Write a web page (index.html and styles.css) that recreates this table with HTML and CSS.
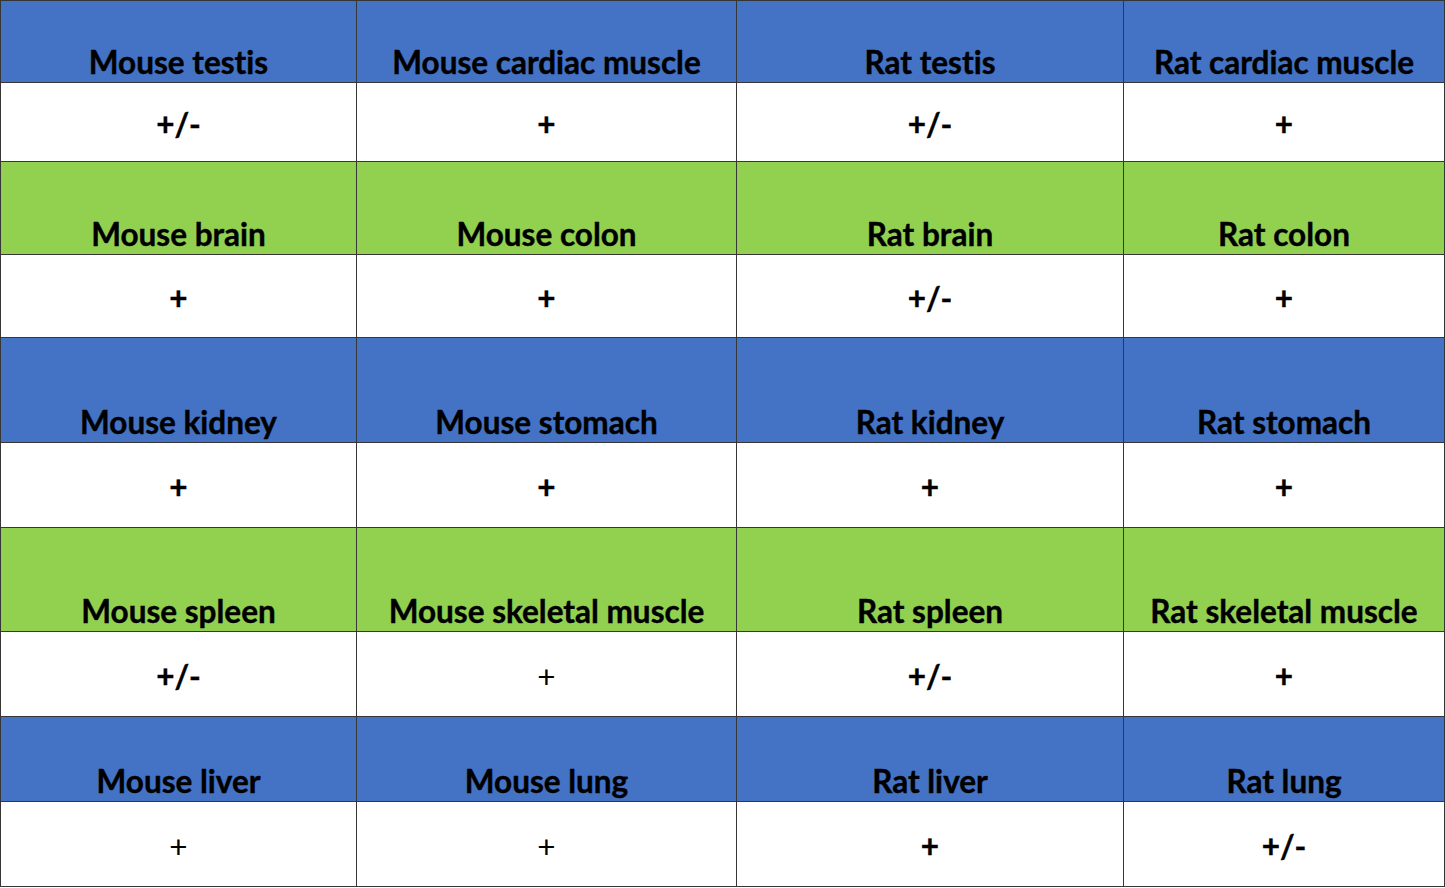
FILE: index.html
```html
<!DOCTYPE html>
<html>
<head>
<meta charset="utf-8">
<link rel="stylesheet" href="styles.css">
</head>
<body>
<table class="grid">
  <colgroup>
    <col class="c1"><col class="c2"><col class="c3"><col class="c4">
  </colgroup>
  <tr class="head blue r1">
    <th>Mouse testis</th><th>Mouse cardiac muscle</th><th>Rat testis</th><th>Rat cardiac muscle</th>
  </tr>
  <tr class="val v1">
    <td>+/-</td><td>+</td><td>+/-</td><td>+</td>
  </tr>
  <tr class="head green r2">
    <th>Mouse brain</th><th>Mouse colon</th><th>Rat brain</th><th>Rat colon</th>
  </tr>
  <tr class="val v2">
    <td>+</td><td>+</td><td>+/-</td><td>+</td>
  </tr>
  <tr class="head blue r3">
    <th>Mouse kidney</th><th>Mouse stomach</th><th>Rat kidney</th><th>Rat stomach</th>
  </tr>
  <tr class="val v3">
    <td>+</td><td>+</td><td>+</td><td>+</td>
  </tr>
  <tr class="head green r4">
    <th>Mouse spleen</th><th>Mouse skeletal muscle</th><th>Rat spleen</th><th>Rat skeletal muscle</th>
  </tr>
  <tr class="val v4">
    <td>+/-</td><td class="thin">+</td><td>+/-</td><td>+</td>
  </tr>
  <tr class="head blue r5">
    <th>Mouse liver</th><th>Mouse lung</th><th>Rat liver</th><th>Rat lung</th>
  </tr>
  <tr class="val v5">
    <td class="thin">+</td><td class="thin">+</td><td>+</td><td>+/-</td>
  </tr>
</table>
</body>
</html>
```

FILE: styles.css
```css
html, body {
  margin: 0;
  padding: 0;
  background: #ffffff;
}

.grid {
  border-collapse: collapse;
  table-layout: fixed;
  width: 1444px;
  font-family: Lato, "Open Sans", "Liberation Sans", sans-serif;
  font-variant-ligatures: none;
  font-feature-settings: "liga" 0, "clig" 0;
  color: #000;
}

.c1 { width: 356px; }
.c2 { width: 380px; }
.c3 { width: 387px; }
.c4 { width: 321px; }

.grid th,
.grid td {
  border: 1.5px solid #363636;
  text-align: center;
  padding: 0;
  box-sizing: border-box;
}

.head th {
  font-size: 31.5px;
  font-weight: 700;
  vertical-align: bottom;
  line-height: 34px;
  padding-bottom: 3px;
  white-space: nowrap;
  -webkit-text-stroke: 0.4px #000;
}

.blue th { background: #4472c4; }
.green th { background: #92d050; }

.val td {
  font-size: 31.5px;
  font-weight: 700;
  vertical-align: middle;
  line-height: 34px;
  padding-top: 3px;
  -webkit-text-stroke: 0.4px #000;
}

.val td.thin {
  font-weight: 400;
  -webkit-text-stroke: 0;
}

.r1 { height: 82px; }
.v1 { height: 79px; }
.r2 { height: 93px; }
.v2 { height: 83px; }
.r3 { height: 105px; }
.v3 { height: 85px; }
.r4 { height: 104px; }
.v4 { height: 85px; }
.r5 { height: 85px; }
.v5 { height: 85px; }
```
